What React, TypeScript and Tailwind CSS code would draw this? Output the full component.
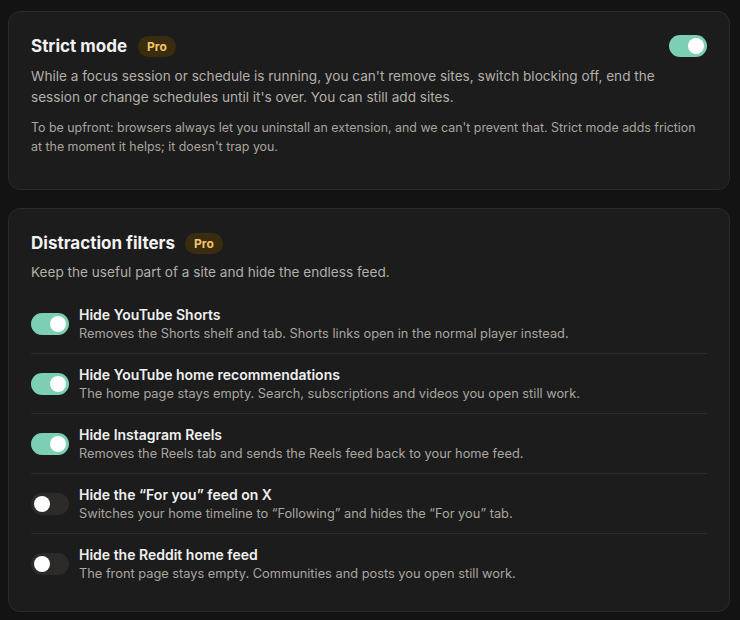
import { useState } from 'react';

const font = { fontFamily: 'Inter, "Noto Sans", sans-serif' };

function Toggle({ on, onChange }: { on: boolean; onChange: () => void }) {
  return (
    <button
      onClick={onChange}
      className={`relative h-[22px] w-[38px] shrink-0 rounded-full transition-colors ${
        on ? 'bg-[#7ccfb5]' : 'bg-[#2c2b29]'
      }`}
    >
      <span
        className={`absolute top-[3px] h-4 w-4 rounded-full bg-white transition-all ${
          on ? 'left-[19px]' : 'left-[3px]'
        }`}
      />
    </button>
  );
}

function ProBadge() {
  return (
    <span className="rounded-full bg-[#3a2c0f] px-[9px] py-[2px] text-[12px] font-bold leading-[17px] text-[#f3c46b]">
      Pro
    </span>
  );
}

const FILTERS = [
  {
    title: 'Hide YouTube Shorts',
    desc: 'Removes the Shorts shelf and tab. Shorts links open in the normal player instead.',
    on: true,
  },
  {
    title: 'Hide YouTube home recommendations',
    desc: 'The home page stays empty. Search, subscriptions and videos you open still work.',
    on: true,
  },
  {
    title: 'Hide Instagram Reels',
    desc: 'Removes the Reels tab and sends the Reels feed back to your home feed.',
    on: true,
  },
  {
    title: 'Hide the \u201cFor you\u201d feed on X',
    desc: 'Switches your home timeline to \u201cFollowing\u201d and hides the \u201cFor you\u201d tab.',
    on: false,
  },
  {
    title: 'Hide the Reddit home feed',
    desc: 'The front page stays empty. Communities and posts you open still work.',
    on: false,
  },
];

export default function App() {
  const [strict, setStrict] = useState(true);
  const [filters, setFilters] = useState(FILTERS.map((f) => f.on));

  return (
    <div className="min-h-screen bg-[#131313] pb-2 pl-2 pr-[10px] pt-[11px]" style={font}>
      {/* Strict mode */}
      <section className="rounded-[12px] border border-[#2a2a2a] bg-[#1c1c1c] px-[22px] pb-[33px] pt-[23px]">
        <div className="flex h-[22px] items-center justify-between">
          <div className="flex items-center gap-[11px]">
            <h2 className="text-[17px] font-bold leading-[22px] text-[#f2f2f2]">Strict mode</h2>
            <ProBadge />
          </div>
          <Toggle on={strict} onChange={() => setStrict(!strict)} />
        </div>
        <p className="mt-[9px] text-[13.6px] leading-[21px] text-[#b3afa9]">
          While a focus session or schedule is running, you can't remove sites, switch blocking off, end the
          session or change schedules until it's over. You can still add sites.
        </p>
        <p className="mt-[10px] text-[12.4px] leading-[19px] text-[#a9a59f]">
          To be upfront: browsers always let you uninstall an extension, and we can't prevent that. Strict mode
          adds friction at the moment it helps; it doesn't trap you.
        </p>
      </section>

      {/* Distraction filters */}
      <section className="mt-[18px] rounded-[12px] border border-[#2a2a2a] bg-[#1c1c1c] px-[22px] pb-[18px] pt-[23px]">
        <div className="flex h-[22px] items-center gap-[10px]">
          <h2 className="text-[17px] font-bold leading-[22px] text-[#f2f2f2]">Distraction filters</h2>
          <ProBadge />
        </div>
        <p className="mt-[8px] text-[13.6px] leading-[21px] text-[#b3afa9]">
          Keep the useful part of a site and hide the endless feed.
        </p>
        <div className="mt-[11px]">
          {FILTERS.map((f, i) => (
            <div
              key={f.title}
              className={`flex items-center gap-[10px] pb-[10px] pt-[11px] ${
                i > 0 ? 'border-t border-[#2b2b2b]' : ''
              }`}
            >
              <Toggle
                on={filters[i]}
                onChange={() => setFilters(filters.map((v, j) => (j === i ? !v : v)))}
              />
              <div className="min-w-0">
                <div className="text-[14px] font-semibold leading-[20px] text-[#f0f0f0]">{f.title}</div>
                <div className="text-[12.8px] leading-[18px] text-[#aaa6a0]">{f.desc}</div>
              </div>
            </div>
          ))}
        </div>
      </section>
    </div>
  );
}
